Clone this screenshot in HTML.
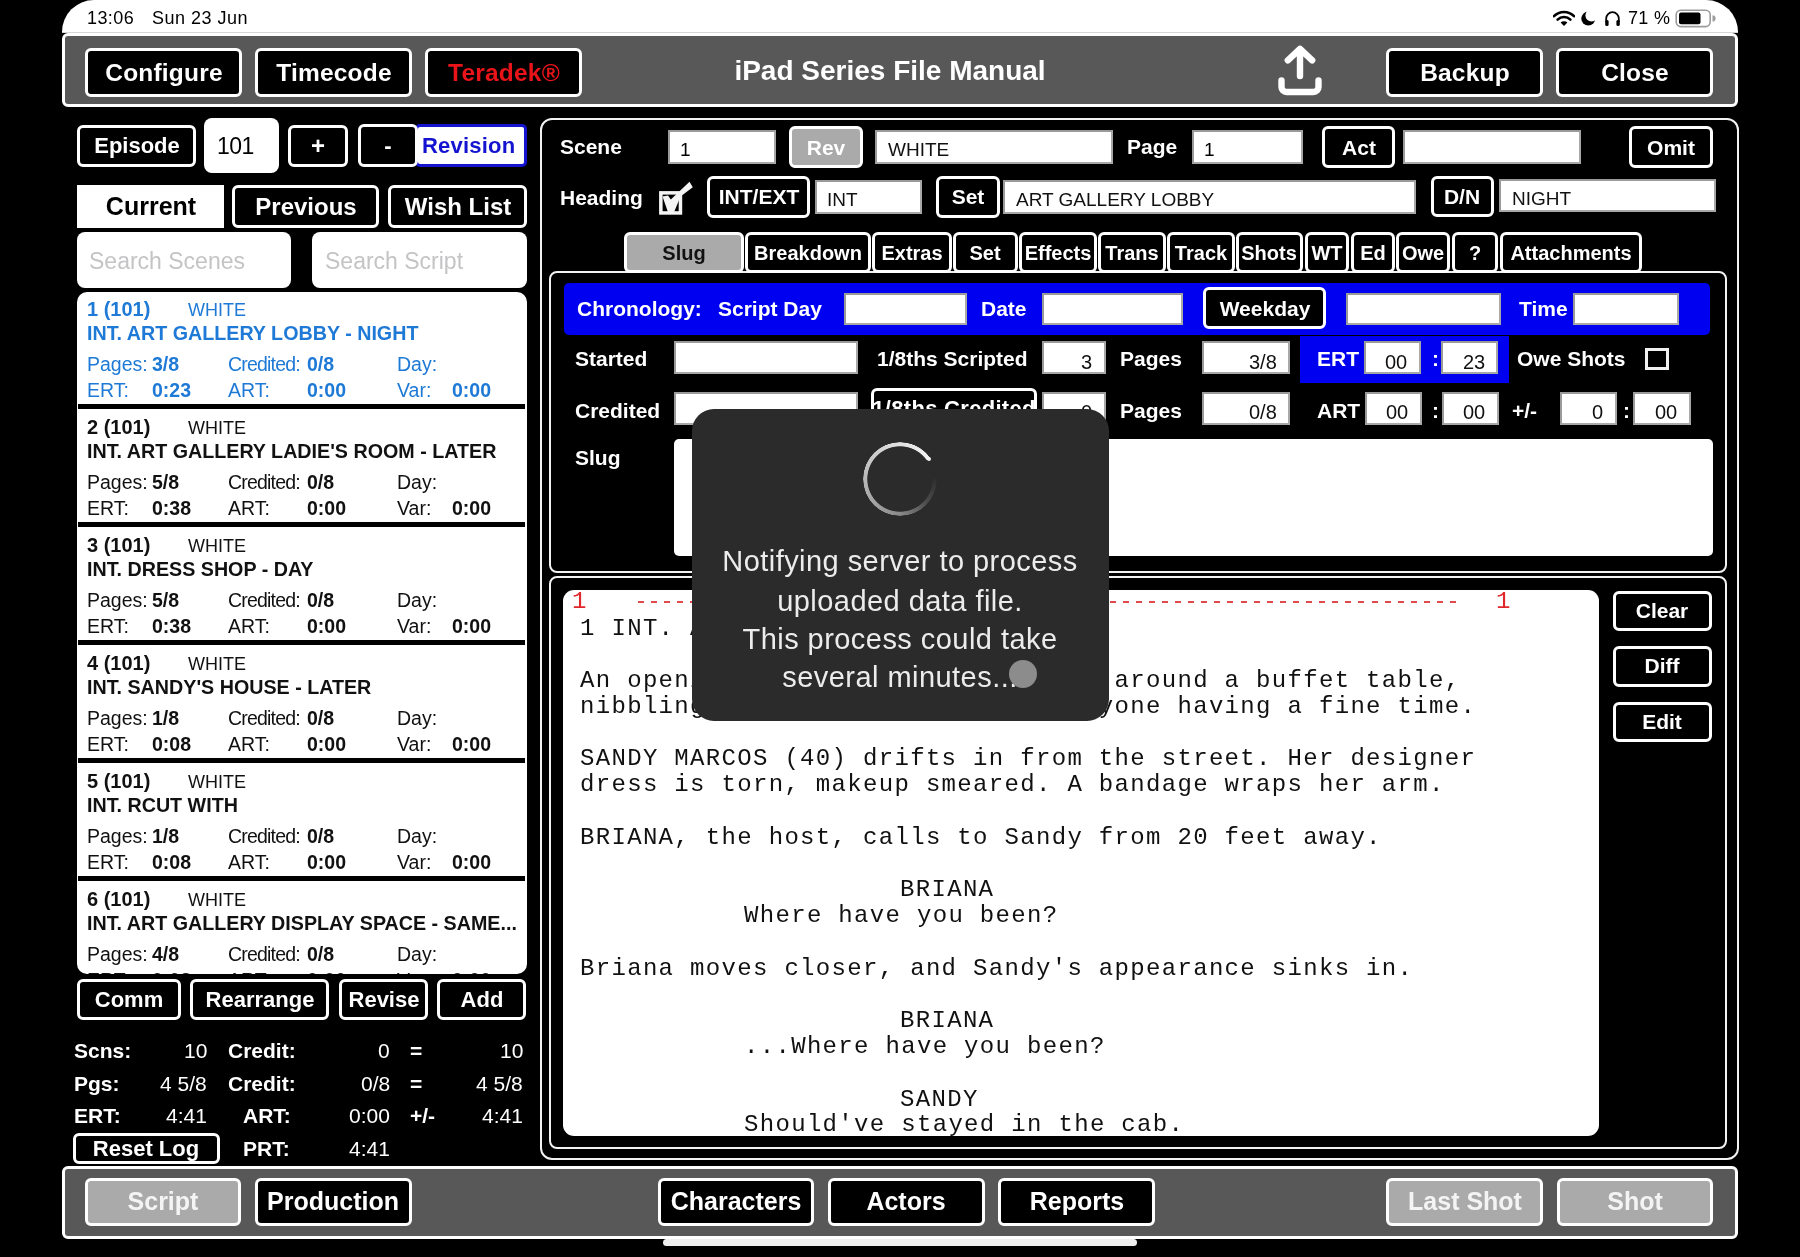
<!DOCTYPE html>
<html><head><meta charset="utf-8"><style>
html,body{margin:0;padding:0;}
body{width:1800px;height:1257px;background:#000;position:relative;overflow:hidden;font-family:'Liberation Sans', sans-serif;}
body div, body svg{position:absolute;}
.t{white-space:nowrap;will-change:transform;}
</style></head><body>
<div style="left:62px;top:0px;width:1676px;height:32px;background:#fff;border-radius:38px 38px 0 0;"></div>
<div style="left:62px;top:32px;width:1676px;height:1px;background:#d6d6d6;"></div>
<div class="t" style="left:87px;top:8.74px;font:normal 18px/18px 'Liberation Sans', sans-serif;color:#000;letter-spacing:0.4px;">13:06</div>
<div class="t" style="left:152px;top:8.74px;font:normal 18px/18px 'Liberation Sans', sans-serif;color:#000;letter-spacing:0.5px;">Sun 23 Jun</div>
<div class="t" style="left:1628px;top:8.74px;font:normal 18px/18px 'Liberation Sans', sans-serif;color:#000;letter-spacing:0.3px;">71 %</div>
<svg style="left:1553px;top:10px" width="22" height="17" viewBox="0 0 22 17">
<path d="M1 6.2 A14 14 0 0 1 21 6.2" fill="none" stroke="#000" stroke-width="2.6" stroke-linecap="round"/>
<path d="M4.6 9.6 A9 9 0 0 1 17.4 9.6" fill="none" stroke="#000" stroke-width="2.6" stroke-linecap="round"/>
<path d="M11 16 L7.6 12.6 A4.8 4.8 0 0 1 14.4 12.6 Z" fill="#000"/>
</svg>
<svg style="left:1580px;top:10px" width="17" height="17" viewBox="0 0 17 17">
<defs><mask id="mm"><rect width="17" height="17" fill="#fff"/><circle cx="11.6" cy="5.4" r="6.2" fill="#000"/></mask></defs>
<circle cx="8.3" cy="8.6" r="7" fill="#000" mask="url(#mm)"/>
</svg>
<svg style="left:1604px;top:10px" width="17" height="17" viewBox="0 0 17 17">
<path d="M2.2 12 V8.5 A6.3 6.3 0 0 1 14.8 8.5 V12" fill="none" stroke="#000" stroke-width="1.8"/>
<rect x="1.2" y="10" width="3.4" height="6" rx="1.5" fill="#000"/>
<rect x="12.4" y="10" width="3.4" height="6" rx="1.5" fill="#000"/>
</svg>
<svg style="left:1675px;top:9px" width="42" height="19" viewBox="0 0 42 19">
<rect x="1.2" y="1.2" width="34" height="16.4" rx="4.5" fill="none" stroke="#9c9c9c" stroke-width="1.6"/>
<rect x="4" y="3.6" width="21.5" height="11.6" rx="2" fill="#000"/>
<path d="M37.5 6.3 A3 3 0 0 1 37.5 12.5 Z" fill="#9c9c9c"/>
</svg>
<div style="left:62px;top:33px;width:1676px;height:74px;background:#585858;border:3px solid #fff;border-radius:6px;box-sizing:border-box;"></div>
<div style="left:85px;top:48px;width:157px;height:49px;background:#000;border:3px solid #fff;border-radius:6px;box-sizing:border-box;"></div>
<div class="t" style="left:-336.5px;width:1000px;text-align:center;top:60.54px;font:bold 24.5px/24.5px 'Liberation Sans', sans-serif;color:#fff;letter-spacing:0.2px;">Configure</div>
<div style="left:255px;top:48px;width:157px;height:49px;background:#000;border:3px solid #fff;border-radius:6px;box-sizing:border-box;"></div>
<div class="t" style="left:-166.5px;width:1000px;text-align:center;top:60.54px;font:bold 24.5px/24.5px 'Liberation Sans', sans-serif;color:#fff;letter-spacing:0.2px;">Timecode</div>
<div style="left:425px;top:48px;width:157px;height:49px;background:#000;border:3px solid #fff;border-radius:6px;box-sizing:border-box;"></div>
<div class="t" style="left:3.5px;width:1000px;text-align:center;top:60.54px;font:bold 24.5px/24.5px 'Liberation Sans', sans-serif;color:#e8141a;letter-spacing:0.2px;">Teradek®</div>
<div style="left:1386px;top:48px;width:157px;height:49px;background:#000;border:3px solid #fff;border-radius:6px;box-sizing:border-box;"></div>
<div class="t" style="left:964.5px;width:1000px;text-align:center;top:60.54px;font:bold 24.5px/24.5px 'Liberation Sans', sans-serif;color:#fff;letter-spacing:0.2px;">Backup</div>
<div style="left:1556px;top:48px;width:157px;height:49px;background:#000;border:3px solid #fff;border-radius:6px;box-sizing:border-box;"></div>
<div class="t" style="left:1134.5px;width:1000px;text-align:center;top:60.54px;font:bold 24.5px/24.5px 'Liberation Sans', sans-serif;color:#fff;letter-spacing:0.2px;">Close</div>
<div class="t" style="left:390px;width:1000px;text-align:center;top:57.27px;font:bold 28px/28px 'Liberation Sans', sans-serif;color:#fff;">iPad Series File Manual</div>
<svg style="left:1274px;top:42px" width="52" height="58" viewBox="0 0 52 58">
<path d="M26 34 V8 M13.8 18.3 L26 6.8 L38.2 18.3" fill="none" stroke="#fff" stroke-width="6.4" stroke-linecap="round" stroke-linejoin="round"/>
<path d="M7.5 38.5 V45 A5 5 0 0 0 12.5 50 H39.5 A5 5 0 0 0 44.5 45 V38.5" fill="none" stroke="#fff" stroke-width="6.4" stroke-linecap="round" stroke-linejoin="round"/>
</svg>
<div style="left:77px;top:125px;width:119px;height:42px;background:#000;border:3px solid #fff;border-radius:6px;box-sizing:border-box;"></div>
<div class="t" style="left:-363.5px;width:1000px;text-align:center;top:135.35px;font:bold 22px/22px 'Liberation Sans', sans-serif;color:#fff;">Episode</div>
<div style="left:204px;top:118px;width:75px;height:55px;background:#fff;border-radius:8px;"></div>
<div class="t" style="left:217px;top:134.51px;font:normal 23px/23px 'Liberation Sans', sans-serif;color:#000;letter-spacing:-0.5px;">101</div>
<div style="left:288px;top:125px;width:60px;height:42px;background:#000;border:3px solid #fff;border-radius:6px;box-sizing:border-box;"></div>
<div class="t" style="left:-182.0px;width:1000px;text-align:center;top:133.66px;font:bold 24px/24px 'Liberation Sans', sans-serif;color:#fff;">+</div>
<div style="left:415px;top:124px;width:112px;height:43px;background:#fff;border:3px solid #1414d0;border-radius:5px;box-sizing:border-box;"></div>
<div class="t" style="left:422px;top:135.35px;font:bold 22px/22px 'Liberation Sans', sans-serif;color:#1414d0;letter-spacing:0.2px;">Revision</div>
<div style="left:358px;top:124px;width:60px;height:43px;background:#000;border:3px solid #fff;border-radius:6px;box-sizing:border-box;"></div>
<div class="t" style="left:-112.0px;width:1000px;text-align:center;top:135.35px;font:bold 22px/22px 'Liberation Sans', sans-serif;color:#fff;">-</div>
<div style="left:77px;top:185px;width:147px;height:43px;background:#fff;"></div>
<div class="t" style="left:-349.5px;width:1000px;text-align:center;top:193.81px;font:bold 25px/25px 'Liberation Sans', sans-serif;color:#000;">Current</div>
<div style="left:232px;top:185px;width:147px;height:43px;background:#000;border:3px solid #fff;border-radius:6px;box-sizing:border-box;"></div>
<div class="t" style="left:-194.5px;width:1000px;text-align:center;top:194.66px;font:bold 24px/24px 'Liberation Sans', sans-serif;color:#fff;">Previous</div>
<div style="left:388px;top:185px;width:139px;height:43px;background:#000;border:3px solid #fff;border-radius:6px;box-sizing:border-box;"></div>
<div class="t" style="left:-42.5px;width:1000px;text-align:center;top:194.66px;font:bold 24px/24px 'Liberation Sans', sans-serif;color:#fff;">Wish List</div>
<div style="left:77px;top:232px;width:214px;height:56px;background:#fff;border-radius:8px;"></div>
<div class="t" style="left:89px;top:249.51px;font:normal 23px/23px 'Liberation Sans', sans-serif;color:#c4c4c6;">Search Scenes</div>
<div style="left:312px;top:232px;width:215px;height:56px;background:#fff;border-radius:8px;"></div>
<div class="t" style="left:325px;top:249.51px;font:normal 23px/23px 'Liberation Sans', sans-serif;color:#c4c4c6;">Search Script</div>
<div style="left:77px;top:292px;width:450px;height:682px;background:#fff;border-radius:10px;overflow:hidden;">
<div class="t" style="left:10px;top:7.05px;font:bold 20px/20px 'Liberation Sans', sans-serif;color:#1e7ad6;">1 (101)</div>
<div class="t" style="left:111px;top:8.74px;font:normal 18px/18px 'Liberation Sans', sans-serif;color:#1e7ad6;">WHITE</div>
<div class="t" style="left:10px;top:32.30px;font:bold 19.7px/19.7px 'Liberation Sans', sans-serif;color:#1e7ad6;">INT. ART GALLERY LOBBY - NIGHT</div>
<div class="t" style="left:10px;top:62.97px;font:normal 19.5px/19.5px 'Liberation Sans', sans-serif;color:#1e7ad6;">Pages:</div>
<div class="t" style="left:75px;top:62.97px;font:bold 19.5px/19.5px 'Liberation Sans', sans-serif;color:#1e7ad6;">3/8</div>
<div class="t" style="left:150.5px;top:62.97px;font:normal 19.5px/19.5px 'Liberation Sans', sans-serif;color:#1e7ad6;letter-spacing:-0.8px;">Credited:</div>
<div class="t" style="left:230px;top:62.97px;font:bold 19.5px/19.5px 'Liberation Sans', sans-serif;color:#1e7ad6;">0/8</div>
<div class="t" style="left:320px;top:62.97px;font:normal 19.5px/19.5px 'Liberation Sans', sans-serif;color:#1e7ad6;">Day:</div>
<div class="t" style="left:10px;top:88.97px;font:normal 19.5px/19.5px 'Liberation Sans', sans-serif;color:#1e7ad6;">ERT:</div>
<div class="t" style="left:75px;top:88.97px;font:bold 19.5px/19.5px 'Liberation Sans', sans-serif;color:#1e7ad6;">0:23</div>
<div class="t" style="left:150.5px;top:88.97px;font:normal 19.5px/19.5px 'Liberation Sans', sans-serif;color:#1e7ad6;">ART:</div>
<div class="t" style="left:230px;top:88.97px;font:bold 19.5px/19.5px 'Liberation Sans', sans-serif;color:#1e7ad6;">0:00</div>
<div class="t" style="left:320px;top:88.97px;font:normal 19.5px/19.5px 'Liberation Sans', sans-serif;color:#1e7ad6;">Var:</div>
<div class="t" style="left:375px;top:88.97px;font:bold 19.5px/19.5px 'Liberation Sans', sans-serif;color:#1e7ad6;">0:00</div>
<div style="left:1px;top:112px;width:447px;height:5px;background:#000;"></div>
<div class="t" style="left:10px;top:125.05px;font:bold 20px/20px 'Liberation Sans', sans-serif;color:#111;">2 (101)</div>
<div class="t" style="left:111px;top:126.75px;font:normal 18px/18px 'Liberation Sans', sans-serif;color:#111;">WHITE</div>
<div class="t" style="left:10px;top:150.30px;font:bold 19.7px/19.7px 'Liberation Sans', sans-serif;color:#111;">INT. ART GALLERY LADIE'S ROOM - LATER</div>
<div class="t" style="left:10px;top:180.97px;font:normal 19.5px/19.5px 'Liberation Sans', sans-serif;color:#111;">Pages:</div>
<div class="t" style="left:75px;top:180.97px;font:bold 19.5px/19.5px 'Liberation Sans', sans-serif;color:#111;">5/8</div>
<div class="t" style="left:150.5px;top:180.97px;font:normal 19.5px/19.5px 'Liberation Sans', sans-serif;color:#111;letter-spacing:-0.8px;">Credited:</div>
<div class="t" style="left:230px;top:180.97px;font:bold 19.5px/19.5px 'Liberation Sans', sans-serif;color:#111;">0/8</div>
<div class="t" style="left:320px;top:180.97px;font:normal 19.5px/19.5px 'Liberation Sans', sans-serif;color:#111;">Day:</div>
<div class="t" style="left:10px;top:206.97px;font:normal 19.5px/19.5px 'Liberation Sans', sans-serif;color:#111;">ERT:</div>
<div class="t" style="left:75px;top:206.97px;font:bold 19.5px/19.5px 'Liberation Sans', sans-serif;color:#111;">0:38</div>
<div class="t" style="left:150.5px;top:206.97px;font:normal 19.5px/19.5px 'Liberation Sans', sans-serif;color:#111;">ART:</div>
<div class="t" style="left:230px;top:206.97px;font:bold 19.5px/19.5px 'Liberation Sans', sans-serif;color:#111;">0:00</div>
<div class="t" style="left:320px;top:206.97px;font:normal 19.5px/19.5px 'Liberation Sans', sans-serif;color:#111;">Var:</div>
<div class="t" style="left:375px;top:206.97px;font:bold 19.5px/19.5px 'Liberation Sans', sans-serif;color:#111;">0:00</div>
<div style="left:1px;top:230px;width:447px;height:5px;background:#000;"></div>
<div class="t" style="left:10px;top:243.05px;font:bold 20px/20px 'Liberation Sans', sans-serif;color:#111;">3 (101)</div>
<div class="t" style="left:111px;top:244.75px;font:normal 18px/18px 'Liberation Sans', sans-serif;color:#111;">WHITE</div>
<div class="t" style="left:10px;top:268.30px;font:bold 19.7px/19.7px 'Liberation Sans', sans-serif;color:#111;">INT. DRESS SHOP - DAY</div>
<div class="t" style="left:10px;top:298.97px;font:normal 19.5px/19.5px 'Liberation Sans', sans-serif;color:#111;">Pages:</div>
<div class="t" style="left:75px;top:298.97px;font:bold 19.5px/19.5px 'Liberation Sans', sans-serif;color:#111;">5/8</div>
<div class="t" style="left:150.5px;top:298.97px;font:normal 19.5px/19.5px 'Liberation Sans', sans-serif;color:#111;letter-spacing:-0.8px;">Credited:</div>
<div class="t" style="left:230px;top:298.97px;font:bold 19.5px/19.5px 'Liberation Sans', sans-serif;color:#111;">0/8</div>
<div class="t" style="left:320px;top:298.97px;font:normal 19.5px/19.5px 'Liberation Sans', sans-serif;color:#111;">Day:</div>
<div class="t" style="left:10px;top:324.97px;font:normal 19.5px/19.5px 'Liberation Sans', sans-serif;color:#111;">ERT:</div>
<div class="t" style="left:75px;top:324.97px;font:bold 19.5px/19.5px 'Liberation Sans', sans-serif;color:#111;">0:38</div>
<div class="t" style="left:150.5px;top:324.97px;font:normal 19.5px/19.5px 'Liberation Sans', sans-serif;color:#111;">ART:</div>
<div class="t" style="left:230px;top:324.97px;font:bold 19.5px/19.5px 'Liberation Sans', sans-serif;color:#111;">0:00</div>
<div class="t" style="left:320px;top:324.97px;font:normal 19.5px/19.5px 'Liberation Sans', sans-serif;color:#111;">Var:</div>
<div class="t" style="left:375px;top:324.97px;font:bold 19.5px/19.5px 'Liberation Sans', sans-serif;color:#111;">0:00</div>
<div style="left:1px;top:348px;width:447px;height:5px;background:#000;"></div>
<div class="t" style="left:10px;top:361.05px;font:bold 20px/20px 'Liberation Sans', sans-serif;color:#111;">4 (101)</div>
<div class="t" style="left:111px;top:362.75px;font:normal 18px/18px 'Liberation Sans', sans-serif;color:#111;">WHITE</div>
<div class="t" style="left:10px;top:386.30px;font:bold 19.7px/19.7px 'Liberation Sans', sans-serif;color:#111;">INT. SANDY'S HOUSE - LATER</div>
<div class="t" style="left:10px;top:416.97px;font:normal 19.5px/19.5px 'Liberation Sans', sans-serif;color:#111;">Pages:</div>
<div class="t" style="left:75px;top:416.97px;font:bold 19.5px/19.5px 'Liberation Sans', sans-serif;color:#111;">1/8</div>
<div class="t" style="left:150.5px;top:416.97px;font:normal 19.5px/19.5px 'Liberation Sans', sans-serif;color:#111;letter-spacing:-0.8px;">Credited:</div>
<div class="t" style="left:230px;top:416.97px;font:bold 19.5px/19.5px 'Liberation Sans', sans-serif;color:#111;">0/8</div>
<div class="t" style="left:320px;top:416.97px;font:normal 19.5px/19.5px 'Liberation Sans', sans-serif;color:#111;">Day:</div>
<div class="t" style="left:10px;top:442.97px;font:normal 19.5px/19.5px 'Liberation Sans', sans-serif;color:#111;">ERT:</div>
<div class="t" style="left:75px;top:442.97px;font:bold 19.5px/19.5px 'Liberation Sans', sans-serif;color:#111;">0:08</div>
<div class="t" style="left:150.5px;top:442.97px;font:normal 19.5px/19.5px 'Liberation Sans', sans-serif;color:#111;">ART:</div>
<div class="t" style="left:230px;top:442.97px;font:bold 19.5px/19.5px 'Liberation Sans', sans-serif;color:#111;">0:00</div>
<div class="t" style="left:320px;top:442.97px;font:normal 19.5px/19.5px 'Liberation Sans', sans-serif;color:#111;">Var:</div>
<div class="t" style="left:375px;top:442.97px;font:bold 19.5px/19.5px 'Liberation Sans', sans-serif;color:#111;">0:00</div>
<div style="left:1px;top:466px;width:447px;height:5px;background:#000;"></div>
<div class="t" style="left:10px;top:479.05px;font:bold 20px/20px 'Liberation Sans', sans-serif;color:#111;">5 (101)</div>
<div class="t" style="left:111px;top:480.75px;font:normal 18px/18px 'Liberation Sans', sans-serif;color:#111;">WHITE</div>
<div class="t" style="left:10px;top:504.30px;font:bold 19.7px/19.7px 'Liberation Sans', sans-serif;color:#111;">INT. RCUT WITH</div>
<div class="t" style="left:10px;top:534.97px;font:normal 19.5px/19.5px 'Liberation Sans', sans-serif;color:#111;">Pages:</div>
<div class="t" style="left:75px;top:534.97px;font:bold 19.5px/19.5px 'Liberation Sans', sans-serif;color:#111;">1/8</div>
<div class="t" style="left:150.5px;top:534.97px;font:normal 19.5px/19.5px 'Liberation Sans', sans-serif;color:#111;letter-spacing:-0.8px;">Credited:</div>
<div class="t" style="left:230px;top:534.97px;font:bold 19.5px/19.5px 'Liberation Sans', sans-serif;color:#111;">0/8</div>
<div class="t" style="left:320px;top:534.97px;font:normal 19.5px/19.5px 'Liberation Sans', sans-serif;color:#111;">Day:</div>
<div class="t" style="left:10px;top:560.97px;font:normal 19.5px/19.5px 'Liberation Sans', sans-serif;color:#111;">ERT:</div>
<div class="t" style="left:75px;top:560.97px;font:bold 19.5px/19.5px 'Liberation Sans', sans-serif;color:#111;">0:08</div>
<div class="t" style="left:150.5px;top:560.97px;font:normal 19.5px/19.5px 'Liberation Sans', sans-serif;color:#111;">ART:</div>
<div class="t" style="left:230px;top:560.97px;font:bold 19.5px/19.5px 'Liberation Sans', sans-serif;color:#111;">0:00</div>
<div class="t" style="left:320px;top:560.97px;font:normal 19.5px/19.5px 'Liberation Sans', sans-serif;color:#111;">Var:</div>
<div class="t" style="left:375px;top:560.97px;font:bold 19.5px/19.5px 'Liberation Sans', sans-serif;color:#111;">0:00</div>
<div style="left:1px;top:584px;width:447px;height:5px;background:#000;"></div>
<div class="t" style="left:10px;top:597.05px;font:bold 20px/20px 'Liberation Sans', sans-serif;color:#111;">6 (101)</div>
<div class="t" style="left:111px;top:598.75px;font:normal 18px/18px 'Liberation Sans', sans-serif;color:#111;">WHITE</div>
<div class="t" style="left:10px;top:622.30px;font:bold 19.7px/19.7px 'Liberation Sans', sans-serif;color:#111;">INT. ART GALLERY DISPLAY SPACE - SAME...</div>
<div class="t" style="left:10px;top:652.97px;font:normal 19.5px/19.5px 'Liberation Sans', sans-serif;color:#111;">Pages:</div>
<div class="t" style="left:75px;top:652.97px;font:bold 19.5px/19.5px 'Liberation Sans', sans-serif;color:#111;">4/8</div>
<div class="t" style="left:150.5px;top:652.97px;font:normal 19.5px/19.5px 'Liberation Sans', sans-serif;color:#111;letter-spacing:-0.8px;">Credited:</div>
<div class="t" style="left:230px;top:652.97px;font:bold 19.5px/19.5px 'Liberation Sans', sans-serif;color:#111;">0/8</div>
<div class="t" style="left:320px;top:652.97px;font:normal 19.5px/19.5px 'Liberation Sans', sans-serif;color:#111;">Day:</div>
<div class="t" style="left:10px;top:678.97px;font:normal 19.5px/19.5px 'Liberation Sans', sans-serif;color:#111;">ERT:</div>
<div class="t" style="left:75px;top:678.97px;font:bold 19.5px/19.5px 'Liberation Sans', sans-serif;color:#111;">0:08</div>
<div class="t" style="left:150.5px;top:678.97px;font:normal 19.5px/19.5px 'Liberation Sans', sans-serif;color:#111;">ART:</div>
<div class="t" style="left:230px;top:678.97px;font:bold 19.5px/19.5px 'Liberation Sans', sans-serif;color:#111;">0:00</div>
<div class="t" style="left:320px;top:678.97px;font:normal 19.5px/19.5px 'Liberation Sans', sans-serif;color:#111;">Var:</div>
<div class="t" style="left:375px;top:678.97px;font:bold 19.5px/19.5px 'Liberation Sans', sans-serif;color:#111;">0:00</div>
<div style="left:1px;top:702px;width:447px;height:5px;background:#000;"></div>
<div class="t" style="left:10px;top:715.05px;font:bold 20px/20px 'Liberation Sans', sans-serif;color:#111;">7 (101)</div>
<div class="t" style="left:111px;top:716.75px;font:normal 18px/18px 'Liberation Sans', sans-serif;color:#111;">WHITE</div>
<div class="t" style="left:10px;top:740.30px;font:bold 19.7px/19.7px 'Liberation Sans', sans-serif;color:#111;">INT. ART GALLERY - LATER</div>
<div class="t" style="left:10px;top:770.97px;font:normal 19.5px/19.5px 'Liberation Sans', sans-serif;color:#111;">Pages:</div>
<div class="t" style="left:75px;top:770.97px;font:bold 19.5px/19.5px 'Liberation Sans', sans-serif;color:#111;">1/8</div>
<div class="t" style="left:150.5px;top:770.97px;font:normal 19.5px/19.5px 'Liberation Sans', sans-serif;color:#111;letter-spacing:-0.8px;">Credited:</div>
<div class="t" style="left:230px;top:770.97px;font:bold 19.5px/19.5px 'Liberation Sans', sans-serif;color:#111;">0/8</div>
<div class="t" style="left:320px;top:770.97px;font:normal 19.5px/19.5px 'Liberation Sans', sans-serif;color:#111;">Day:</div>
<div class="t" style="left:10px;top:796.97px;font:normal 19.5px/19.5px 'Liberation Sans', sans-serif;color:#111;">ERT:</div>
<div class="t" style="left:75px;top:796.97px;font:bold 19.5px/19.5px 'Liberation Sans', sans-serif;color:#111;">0:08</div>
<div class="t" style="left:150.5px;top:796.97px;font:normal 19.5px/19.5px 'Liberation Sans', sans-serif;color:#111;">ART:</div>
<div class="t" style="left:230px;top:796.97px;font:bold 19.5px/19.5px 'Liberation Sans', sans-serif;color:#111;">0:00</div>
<div class="t" style="left:320px;top:796.97px;font:normal 19.5px/19.5px 'Liberation Sans', sans-serif;color:#111;">Var:</div>
<div class="t" style="left:375px;top:796.97px;font:bold 19.5px/19.5px 'Liberation Sans', sans-serif;color:#111;">0:00</div>
<div style="left:1px;top:820px;width:447px;height:5px;background:#000;"></div>
</div>
<div style="left:77px;top:979px;width:104px;height:40.5px;background:#000;border:3px solid #fff;border-radius:6px;box-sizing:border-box;"></div>
<div class="t" style="left:-371.0px;width:1000px;text-align:center;top:989.36px;font:bold 22px/22px 'Liberation Sans', sans-serif;color:#fff;">Comm</div>
<div style="left:190px;top:979px;width:139px;height:40.5px;background:#000;border:3px solid #fff;border-radius:6px;box-sizing:border-box;"></div>
<div class="t" style="left:-240.5px;width:1000px;text-align:center;top:989.36px;font:bold 22px/22px 'Liberation Sans', sans-serif;color:#fff;">Rearrange</div>
<div style="left:339px;top:979px;width:89px;height:40.5px;background:#000;border:3px solid #fff;border-radius:6px;box-sizing:border-box;"></div>
<div class="t" style="left:-116.5px;width:1000px;text-align:center;top:989.36px;font:bold 22px/22px 'Liberation Sans', sans-serif;color:#fff;">Revise</div>
<div style="left:437px;top:979px;width:89px;height:40.5px;background:#000;border:3px solid #fff;border-radius:6px;box-sizing:border-box;"></div>
<div class="t" style="left:-18.5px;width:1000px;text-align:center;top:989.36px;font:bold 22px/22px 'Liberation Sans', sans-serif;color:#fff;">Add</div>
<div class="t" style="left:74px;top:1040.20px;font:bold 21px/21px 'Liberation Sans', sans-serif;color:#fff;">Scns:</div>
<div class="t" style="right:1593px;text-align:right;top:1040.20px;font:normal 21px/21px 'Liberation Sans', sans-serif;color:#fff;">10</div>
<div class="t" style="left:228px;top:1040.20px;font:bold 21px/21px 'Liberation Sans', sans-serif;color:#fff;">Credit:</div>
<div class="t" style="right:1410px;text-align:right;top:1040.20px;font:normal 21px/21px 'Liberation Sans', sans-serif;color:#fff;">0</div>
<div class="t" style="left:410px;top:1040.20px;font:bold 21px/21px 'Liberation Sans', sans-serif;color:#fff;">=</div>
<div class="t" style="right:1277px;text-align:right;top:1040.20px;font:normal 21px/21px 'Liberation Sans', sans-serif;color:#fff;">10</div>
<div class="t" style="left:74px;top:1073.20px;font:bold 21px/21px 'Liberation Sans', sans-serif;color:#fff;">Pgs:</div>
<div class="t" style="right:1593px;text-align:right;top:1073.20px;font:normal 21px/21px 'Liberation Sans', sans-serif;color:#fff;">4 5/8</div>
<div class="t" style="left:228px;top:1073.20px;font:bold 21px/21px 'Liberation Sans', sans-serif;color:#fff;">Credit:</div>
<div class="t" style="right:1410px;text-align:right;top:1073.20px;font:normal 21px/21px 'Liberation Sans', sans-serif;color:#fff;">0/8</div>
<div class="t" style="left:410px;top:1073.20px;font:bold 21px/21px 'Liberation Sans', sans-serif;color:#fff;">=</div>
<div class="t" style="right:1277px;text-align:right;top:1073.20px;font:normal 21px/21px 'Liberation Sans', sans-serif;color:#fff;">4 5/8</div>
<div class="t" style="left:74px;top:1105.20px;font:bold 21px/21px 'Liberation Sans', sans-serif;color:#fff;">ERT:</div>
<div class="t" style="right:1593px;text-align:right;top:1105.20px;font:normal 21px/21px 'Liberation Sans', sans-serif;color:#fff;">4:41</div>
<div class="t" style="left:243px;top:1105.20px;font:bold 21px/21px 'Liberation Sans', sans-serif;color:#fff;">ART:</div>
<div class="t" style="right:1410px;text-align:right;top:1105.20px;font:normal 21px/21px 'Liberation Sans', sans-serif;color:#fff;">0:00</div>
<div class="t" style="left:410px;top:1105.20px;font:bold 21px/21px 'Liberation Sans', sans-serif;color:#fff;">+/-</div>
<div class="t" style="right:1277px;text-align:right;top:1105.20px;font:normal 21px/21px 'Liberation Sans', sans-serif;color:#fff;">4:41</div>
<div style="left:72.5px;top:1132.5px;width:147.5px;height:31.0px;background:#000;border:3px solid #fff;border-radius:6px;box-sizing:border-box;"></div>
<div class="t" style="left:-353.75px;width:1000px;text-align:center;top:1138.36px;font:bold 22px/22px 'Liberation Sans', sans-serif;color:#fff;">Reset Log</div>
<div class="t" style="left:243px;top:1137.70px;font:bold 21px/21px 'Liberation Sans', sans-serif;color:#fff;">PRT:</div>
<div class="t" style="right:1410px;text-align:right;top:1137.70px;font:normal 21px/21px 'Liberation Sans', sans-serif;color:#fff;">4:41</div>
<div style="left:539.5px;top:118px;width:1199.0px;height:1041.5px;border:2px solid #f2f2f2;border-radius:12px;box-sizing:border-box;"></div>
<div class="t" style="left:560px;top:136.20px;font:bold 21px/21px 'Liberation Sans', sans-serif;color:#fff;">Scene</div>
<div style="left:668px;top:130px;width:108px;height:34px;background:#fff;border-style:solid;border-color:#9a9a9a #a8a8a8 #a8a8a8 #9a9a9a;border-width:2.5px 2px 2px 2.5px;box-sizing:border-box;"></div>
<div class="t" style="left:680px;top:139.90px;font:normal 19px/19px 'Liberation Sans', sans-serif;color:#000;">1</div>
<div style="left:789px;top:126px;width:73.5px;height:42px;background:#aaaaaa;border:3px solid #fff;border-radius:6px;box-sizing:border-box;"></div>
<div class="t" style="left:325.75px;width:1000px;text-align:center;top:136.50px;font:bold 21px/21px 'Liberation Sans', sans-serif;color:#fff;">Rev</div>
<div style="left:875px;top:130px;width:237.5px;height:34px;background:#fff;border-style:solid;border-color:#9a9a9a #a8a8a8 #a8a8a8 #9a9a9a;border-width:2.5px 2px 2px 2.5px;box-sizing:border-box;"></div>
<div class="t" style="left:888px;top:139.90px;font:normal 19px/19px 'Liberation Sans', sans-serif;color:#111;">WHITE</div>
<div class="t" style="left:1127px;top:136.20px;font:bold 21px/21px 'Liberation Sans', sans-serif;color:#fff;">Page</div>
<div style="left:1192px;top:130px;width:111px;height:34px;background:#fff;border-style:solid;border-color:#9a9a9a #a8a8a8 #a8a8a8 #9a9a9a;border-width:2.5px 2px 2px 2.5px;box-sizing:border-box;"></div>
<div class="t" style="left:1204px;top:139.90px;font:normal 19px/19px 'Liberation Sans', sans-serif;color:#000;">1</div>
<div style="left:1322px;top:126px;width:73px;height:42px;background:#000;border:3px solid #fff;border-radius:6px;box-sizing:border-box;"></div>
<div class="t" style="left:858.5px;width:1000px;text-align:center;top:136.50px;font:bold 21px/21px 'Liberation Sans', sans-serif;color:#fff;">Act</div>
<div style="left:1403px;top:130px;width:178px;height:34px;background:#fff;border-style:solid;border-color:#9a9a9a #a8a8a8 #a8a8a8 #9a9a9a;border-width:2.5px 2px 2px 2.5px;box-sizing:border-box;"></div>
<div style="left:1628.7px;top:126px;width:84.29999999999995px;height:42px;background:#000;border:3px solid #fff;border-radius:6px;box-sizing:border-box;"></div>
<div class="t" style="left:1170.85px;width:1000px;text-align:center;top:136.50px;font:bold 21px/21px 'Liberation Sans', sans-serif;color:#fff;">Omit</div>
<div class="t" style="left:560px;top:186.70px;font:bold 21px/21px 'Liberation Sans', sans-serif;color:#fff;">Heading</div>
<svg style="left:650px;top:175px" width="50" height="45" viewBox="0 0 50 45">
<rect x="10.85" y="17.85" width="19.6" height="20.1" fill="none" stroke="#f4f4f4" stroke-width="3.5"/>
<polygon points="12.5,21.5 18,20.5 20.8,24.5 39.5,6.8 42.8,12.2 30.5,21.5 23.8,37.8 18.2,37.8" fill="#f4f4f4"/>
</svg>
<div style="left:707px;top:175.5px;width:103px;height:42.5px;background:#000;border:3px solid #fff;border-radius:6px;box-sizing:border-box;"></div>
<div class="t" style="left:258.5px;width:1000px;text-align:center;top:186.20px;font:bold 21px/21px 'Liberation Sans', sans-serif;color:#fff;">INT/EXT</div>
<div style="left:815px;top:180px;width:107px;height:34px;background:#fff;border-style:solid;border-color:#9a9a9a #a8a8a8 #a8a8a8 #9a9a9a;border-width:2.5px 2px 2px 2.5px;box-sizing:border-box;"></div>
<div class="t" style="left:827px;top:190.40px;font:normal 19px/19px 'Liberation Sans', sans-serif;color:#111;">INT</div>
<div style="left:936px;top:175.5px;width:63.5px;height:42.5px;background:#000;border:3px solid #fff;border-radius:6px;box-sizing:border-box;"></div>
<div class="t" style="left:467.75px;width:1000px;text-align:center;top:186.20px;font:bold 21px/21px 'Liberation Sans', sans-serif;color:#fff;">Set</div>
<div style="left:1003px;top:180px;width:413px;height:34px;background:#fff;border-style:solid;border-color:#9a9a9a #a8a8a8 #a8a8a8 #9a9a9a;border-width:2.5px 2px 2px 2.5px;box-sizing:border-box;"></div>
<div class="t" style="left:1016px;top:190.40px;font:normal 19px/19px 'Liberation Sans', sans-serif;color:#111;">ART GALLERY LOBBY</div>
<div style="left:1430.7px;top:176px;width:62.899999999999864px;height:41px;background:#000;border:3px solid #fff;border-radius:6px;box-sizing:border-box;"></div>
<div class="t" style="left:962.1500000000001px;width:1000px;text-align:center;top:186.20px;font:bold 21px/21px 'Liberation Sans', sans-serif;color:#fff;">D/N</div>
<div style="left:1499px;top:179px;width:217px;height:33px;background:#fff;border-style:solid;border-color:#9a9a9a #a8a8a8 #a8a8a8 #9a9a9a;border-width:2.5px 2px 2px 2.5px;box-sizing:border-box;"></div>
<div class="t" style="left:1511.5px;top:189.40px;font:normal 19px/19px 'Liberation Sans', sans-serif;color:#111;">NIGHT</div>
<div style="left:549.4px;top:271px;width:1177.3000000000002px;height:301.70000000000005px;border:2px solid #f2f2f2;border-radius:8px;box-sizing:border-box;"></div>
<div style="left:623.6px;top:231.7px;width:120.79999999999995px;height:41.10000000000002px;background:#aaaaaa;border:3px solid #fff;border-radius:6px;box-sizing:border-box;"></div>
<div class="t" style="left:184.0px;width:1000px;text-align:center;top:242.55px;font:bold 20px/20px 'Liberation Sans', sans-serif;color:#111;">Slug</div>
<div style="left:745px;top:231.7px;width:126px;height:41.10000000000002px;background:#000;border:3px solid #fff;border-radius:6px;box-sizing:border-box;"></div>
<div class="t" style="left:308.0px;width:1000px;text-align:center;top:242.55px;font:bold 20px/20px 'Liberation Sans', sans-serif;color:#fff;">Breakdown</div>
<div style="left:872px;top:231.7px;width:80px;height:41.10000000000002px;background:#000;border:3px solid #fff;border-radius:6px;box-sizing:border-box;"></div>
<div class="t" style="left:412.0px;width:1000px;text-align:center;top:242.55px;font:bold 20px/20px 'Liberation Sans', sans-serif;color:#fff;">Extras</div>
<div style="left:952.8px;top:231.7px;width:65.20000000000005px;height:41.10000000000002px;background:#000;border:3px solid #fff;border-radius:6px;box-sizing:border-box;"></div>
<div class="t" style="left:485.4px;width:1000px;text-align:center;top:242.55px;font:bold 20px/20px 'Liberation Sans', sans-serif;color:#fff;">Set</div>
<div style="left:1019px;top:231.7px;width:78px;height:41.10000000000002px;background:#000;border:3px solid #fff;border-radius:6px;box-sizing:border-box;"></div>
<div class="t" style="left:558.0px;width:1000px;text-align:center;top:242.55px;font:bold 20px/20px 'Liberation Sans', sans-serif;color:#fff;">Effects</div>
<div style="left:1098px;top:231.7px;width:68px;height:41.10000000000002px;background:#000;border:3px solid #fff;border-radius:6px;box-sizing:border-box;"></div>
<div class="t" style="left:632.0px;width:1000px;text-align:center;top:242.55px;font:bold 20px/20px 'Liberation Sans', sans-serif;color:#fff;">Trans</div>
<div style="left:1167px;top:231.7px;width:67.5px;height:41.10000000000002px;background:#000;border:3px solid #fff;border-radius:6px;box-sizing:border-box;"></div>
<div class="t" style="left:700.75px;width:1000px;text-align:center;top:242.55px;font:bold 20px/20px 'Liberation Sans', sans-serif;color:#fff;">Track</div>
<div style="left:1235.5px;top:231.7px;width:67.5px;height:41.10000000000002px;background:#000;border:3px solid #fff;border-radius:6px;box-sizing:border-box;"></div>
<div class="t" style="left:769.25px;width:1000px;text-align:center;top:242.55px;font:bold 20px/20px 'Liberation Sans', sans-serif;color:#fff;">Shots</div>
<div style="left:1305px;top:231.7px;width:44px;height:41.10000000000002px;background:#000;border:3px solid #fff;border-radius:6px;box-sizing:border-box;"></div>
<div class="t" style="left:827.0px;width:1000px;text-align:center;top:242.55px;font:bold 20px/20px 'Liberation Sans', sans-serif;color:#fff;">WT</div>
<div style="left:1350.7px;top:231.7px;width:44.299999999999955px;height:41.10000000000002px;background:#000;border:3px solid #fff;border-radius:6px;box-sizing:border-box;"></div>
<div class="t" style="left:872.8499999999999px;width:1000px;text-align:center;top:242.55px;font:bold 20px/20px 'Liberation Sans', sans-serif;color:#fff;">Ed</div>
<div style="left:1396px;top:231.7px;width:54px;height:41.10000000000002px;background:#000;border:3px solid #fff;border-radius:6px;box-sizing:border-box;"></div>
<div class="t" style="left:923.0px;width:1000px;text-align:center;top:242.55px;font:bold 20px/20px 'Liberation Sans', sans-serif;color:#fff;">Owe</div>
<div style="left:1452px;top:231.7px;width:46px;height:41.10000000000002px;background:#000;border:3px solid #fff;border-radius:6px;box-sizing:border-box;"></div>
<div class="t" style="left:975.0px;width:1000px;text-align:center;top:242.55px;font:bold 20px/20px 'Liberation Sans', sans-serif;color:#fff;">?</div>
<div style="left:1500px;top:231.7px;width:141.5px;height:41.10000000000002px;background:#000;border:3px solid #fff;border-radius:6px;box-sizing:border-box;"></div>
<div class="t" style="left:1070.75px;width:1000px;text-align:center;top:242.55px;font:bold 20px/20px 'Liberation Sans', sans-serif;color:#fff;">Attachments</div>
<div style="left:564px;top:282.7px;width:1146px;height:52.30000000000001px;background:#0000f0;border-radius:5px;"></div>
<div class="t" style="left:576.7px;top:297.70px;font:bold 21px/21px 'Liberation Sans', sans-serif;color:#fff;">Chronology:</div>
<div class="t" style="left:718.3px;top:297.70px;font:bold 21px/21px 'Liberation Sans', sans-serif;color:#fff;">Script Day</div>
<div style="left:844.3px;top:292.7px;width:122.40000000000009px;height:32.30000000000001px;background:#fff;border-style:solid;border-color:#9a9a9a #a8a8a8 #a8a8a8 #9a9a9a;border-width:2.5px 2px 2px 2.5px;box-sizing:border-box;"></div>
<div class="t" style="left:981px;top:297.70px;font:bold 21px/21px 'Liberation Sans', sans-serif;color:#fff;">Date</div>
<div style="left:1042.3px;top:292.7px;width:141.0px;height:32.30000000000001px;background:#fff;border-style:solid;border-color:#9a9a9a #a8a8a8 #a8a8a8 #9a9a9a;border-width:2.5px 2px 2px 2.5px;box-sizing:border-box;"></div>
<div style="left:1203.3px;top:286.7px;width:122.40000000000009px;height:42.60000000000002px;background:#000;border:3px solid #fff;border-radius:6px;box-sizing:border-box;"></div>
<div class="t" style="left:764.5px;width:1000px;text-align:center;top:297.50px;font:bold 21px/21px 'Liberation Sans', sans-serif;color:#fff;">Weekday</div>
<div style="left:1346px;top:292.7px;width:154.70000000000005px;height:32.30000000000001px;background:#fff;border-style:solid;border-color:#9a9a9a #a8a8a8 #a8a8a8 #9a9a9a;border-width:2.5px 2px 2px 2.5px;box-sizing:border-box;"></div>
<div class="t" style="left:1519px;top:297.70px;font:bold 21px/21px 'Liberation Sans', sans-serif;color:#fff;">Time</div>
<div style="left:1573.3px;top:292.7px;width:106.0px;height:32.30000000000001px;background:#fff;border-style:solid;border-color:#9a9a9a #a8a8a8 #a8a8a8 #9a9a9a;border-width:2.5px 2px 2px 2.5px;box-sizing:border-box;"></div>
<div class="t" style="left:575px;top:348.20px;font:bold 21px/21px 'Liberation Sans', sans-serif;color:#fff;">Started</div>
<div style="left:674.3px;top:341px;width:183.4000000000001px;height:33.30000000000001px;background:#fff;border-style:solid;border-color:#9a9a9a #a8a8a8 #a8a8a8 #9a9a9a;border-width:2.5px 2px 2px 2.5px;box-sizing:border-box;"></div>
<div class="t" style="left:876.7px;top:348.20px;font:bold 21px/21px 'Liberation Sans', sans-serif;color:#fff;">1/8ths Scripted</div>
<div style="left:1041.7px;top:341px;width:64.29999999999995px;height:33.30000000000001px;background:#fff;border-style:solid;border-color:#9a9a9a #a8a8a8 #a8a8a8 #9a9a9a;border-width:2.5px 2px 2px 2.5px;box-sizing:border-box;"></div>
<div class="t" style="right:707.5px;text-align:right;top:351.55px;font:normal 20px/20px 'Liberation Sans', sans-serif;color:#111;">3</div>
<div class="t" style="left:1120px;top:348.20px;font:bold 21px/21px 'Liberation Sans', sans-serif;color:#fff;">Pages</div>
<div style="left:1201.7px;top:341px;width:88.29999999999995px;height:33.30000000000001px;background:#fff;border-style:solid;border-color:#9a9a9a #a8a8a8 #a8a8a8 #9a9a9a;border-width:2.5px 2px 2px 2.5px;box-sizing:border-box;"></div>
<div class="t" style="right:523.5px;text-align:right;top:351.55px;font:normal 20px/20px 'Liberation Sans', sans-serif;color:#111;">3/8</div>
<div style="left:1300px;top:336px;width:209.29999999999995px;height:47.30000000000001px;background:#0000f0;"></div>
<div class="t" style="left:1316.7px;top:348.20px;font:bold 21px/21px 'Liberation Sans', sans-serif;color:#fff;">ERT</div>
<div style="left:1364px;top:341px;width:56.700000000000045px;height:33.30000000000001px;background:#fff;border-style:solid;border-color:#9a9a9a #a8a8a8 #a8a8a8 #9a9a9a;border-width:2.5px 2px 2px 2.5px;box-sizing:border-box;"></div>
<div class="t" style="right:392.79999999999995px;text-align:right;top:351.55px;font:normal 20px/20px 'Liberation Sans', sans-serif;color:#111;">00</div>
<div class="t" style="left:1431.7px;top:348.20px;font:bold 21px/21px 'Liberation Sans', sans-serif;color:#fff;">:</div>
<div style="left:1440.7px;top:341px;width:57.59999999999991px;height:33.30000000000001px;background:#fff;border-style:solid;border-color:#9a9a9a #a8a8a8 #a8a8a8 #9a9a9a;border-width:2.5px 2px 2px 2.5px;box-sizing:border-box;"></div>
<div class="t" style="right:315.20000000000005px;text-align:right;top:351.55px;font:normal 20px/20px 'Liberation Sans', sans-serif;color:#111;">23</div>
<div class="t" style="left:1516.7px;top:348.20px;font:bold 21px/21px 'Liberation Sans', sans-serif;color:#fff;">Owe Shots</div>
<div style="left:1645px;top:347.7px;width:24px;height:22.30000000000001px;border:3px solid #f0f0f0;box-sizing:border-box;"></div>
<div class="t" style="left:575px;top:399.70px;font:bold 21px/21px 'Liberation Sans', sans-serif;color:#fff;">Credited</div>
<div style="left:674.3px;top:391.7px;width:183.4000000000001px;height:33.30000000000001px;background:#fff;border-style:solid;border-color:#9a9a9a #a8a8a8 #a8a8a8 #9a9a9a;border-width:2.5px 2px 2px 2.5px;box-sizing:border-box;"></div>
<div style="left:871px;top:388.3px;width:165.70000000000005px;height:43.69999999999999px;background:#000;border:3px solid #fff;border-radius:6px;box-sizing:border-box;"></div>
<div class="t" style="left:453.85px;width:1000px;text-align:center;top:397.86px;font:bold 22px/22px 'Liberation Sans', sans-serif;color:#fff;letter-spacing:0.3px;">1/8ths Credited</div>
<div style="left:1041.7px;top:391.7px;width:64.29999999999995px;height:33.30000000000001px;background:#fff;border-style:solid;border-color:#9a9a9a #a8a8a8 #a8a8a8 #9a9a9a;border-width:2.5px 2px 2px 2.5px;box-sizing:border-box;"></div>
<div class="t" style="right:707.5px;text-align:right;top:402.05px;font:normal 20px/20px 'Liberation Sans', sans-serif;color:#111;">0</div>
<div class="t" style="left:1120px;top:399.70px;font:bold 21px/21px 'Liberation Sans', sans-serif;color:#fff;">Pages</div>
<div style="left:1201.7px;top:391.7px;width:88.29999999999995px;height:33.30000000000001px;background:#fff;border-style:solid;border-color:#9a9a9a #a8a8a8 #a8a8a8 #9a9a9a;border-width:2.5px 2px 2px 2.5px;box-sizing:border-box;"></div>
<div class="t" style="right:523.5px;text-align:right;top:402.05px;font:normal 20px/20px 'Liberation Sans', sans-serif;color:#111;">0/8</div>
<div class="t" style="left:1317.3px;top:399.70px;font:bold 21px/21px 'Liberation Sans', sans-serif;color:#fff;">ART</div>
<div style="left:1365.3px;top:391.7px;width:56.40000000000009px;height:33.30000000000001px;background:#fff;border-style:solid;border-color:#9a9a9a #a8a8a8 #a8a8a8 #9a9a9a;border-width:2.5px 2px 2px 2.5px;box-sizing:border-box;"></div>
<div class="t" style="right:391.79999999999995px;text-align:right;top:402.05px;font:normal 20px/20px 'Liberation Sans', sans-serif;color:#111;">00</div>
<div class="t" style="left:1432px;top:399.70px;font:bold 21px/21px 'Liberation Sans', sans-serif;color:#fff;">:</div>
<div style="left:1441.7px;top:391.7px;width:57.299999999999955px;height:33.30000000000001px;background:#fff;border-style:solid;border-color:#9a9a9a #a8a8a8 #a8a8a8 #9a9a9a;border-width:2.5px 2px 2px 2.5px;box-sizing:border-box;"></div>
<div class="t" style="right:314.5px;text-align:right;top:402.05px;font:normal 20px/20px 'Liberation Sans', sans-serif;color:#111;">00</div>
<div class="t" style="left:1512.3px;top:399.70px;font:bold 21px/21px 'Liberation Sans', sans-serif;color:#fff;">+/-</div>
<div style="left:1560px;top:391.7px;width:56.700000000000045px;height:33.30000000000001px;background:#fff;border-style:solid;border-color:#9a9a9a #a8a8a8 #a8a8a8 #9a9a9a;border-width:2.5px 2px 2px 2.5px;box-sizing:border-box;"></div>
<div class="t" style="right:196.79999999999995px;text-align:right;top:402.05px;font:normal 20px/20px 'Liberation Sans', sans-serif;color:#111;">0</div>
<div class="t" style="left:1623px;top:399.70px;font:bold 21px/21px 'Liberation Sans', sans-serif;color:#fff;">:</div>
<div style="left:1633.3px;top:391.7px;width:57.40000000000009px;height:33.30000000000001px;background:#fff;border-style:solid;border-color:#9a9a9a #a8a8a8 #a8a8a8 #9a9a9a;border-width:2.5px 2px 2px 2.5px;box-sizing:border-box;"></div>
<div class="t" style="right:122.79999999999995px;text-align:right;top:402.05px;font:normal 20px/20px 'Liberation Sans', sans-serif;color:#111;">00</div>
<div class="t" style="left:575px;top:446.70px;font:bold 21px/21px 'Liberation Sans', sans-serif;color:#fff;">Slug</div>
<div style="left:674.3px;top:439.3px;width:1038.7px;height:116.69999999999999px;background:#fff;border-radius:5px;"></div>
<div style="left:549.4px;top:576.3px;width:1177.4px;height:573.2px;border:2px solid #f2f2f2;border-radius:8px;box-sizing:border-box;"></div>
<div style="left:563px;top:590px;width:1035.5px;height:546px;background:#fff;border-radius:11px;overflow:hidden;">
<div class="t" style="left:9px;top:-0.18px;font:normal 24px/24px 'Liberation Mono', monospace;color:#e0282c;">1</div>
<div class="t" style="left:933px;top:-0.18px;font:normal 24px/24px 'Liberation Mono', monospace;color:#e0282c;">1</div>
<div style="left:75px;top:11px;width:823px;height:2px;background:repeating-linear-gradient(90deg,#e04a4c 0 6px,transparent 6px 13.1px);"></div>
<div class="t" style="left:16.50px;top:26.62px;font:normal 24px/24px 'Liberation Mono', monospace;letter-spacing:1.32px;color:#111;">1 INT. ART GALLERY LOBBY - NIGHT</div>
<div class="t" style="left:16.50px;top:78.92px;font:normal 24px/24px 'Liberation Mono', monospace;letter-spacing:1.32px;color:#111;">An opening reception. GUESTS mill around a buffet table,</div>
<div class="t" style="left:16.50px;top:104.92px;font:normal 24px/24px 'Liberation Mono', monospace;letter-spacing:1.32px;color:#111;">nibbling hors d&#39;oeuvres, and everyone having a fine time.</div>
<div class="t" style="left:16.50px;top:156.62px;font:normal 24px/24px 'Liberation Mono', monospace;letter-spacing:1.32px;color:#111;">SANDY MARCOS (40) drifts in from the street. Her designer</div>
<div class="t" style="left:16.50px;top:183.32px;font:normal 24px/24px 'Liberation Mono', monospace;letter-spacing:1.32px;color:#111;">dress is torn, makeup smeared. A bandage wraps her arm.</div>
<div class="t" style="left:16.50px;top:235.62px;font:normal 24px/24px 'Liberation Mono', monospace;letter-spacing:1.32px;color:#111;">BRIANA, the host, calls to Sandy from 20 feet away.</div>
<div class="t" style="left:337.19px;top:288.22px;font:normal 24px/24px 'Liberation Mono', monospace;letter-spacing:1.32px;color:#111;">BRIANA</div>
<div class="t" style="left:180.77px;top:314.22px;font:normal 24px/24px 'Liberation Mono', monospace;letter-spacing:1.32px;color:#111;">Where have you been?</div>
<div class="t" style="left:16.50px;top:367.02px;font:normal 24px/24px 'Liberation Mono', monospace;letter-spacing:1.32px;color:#111;">Briana moves closer, and Sandy&#39;s appearance sinks in.</div>
<div class="t" style="left:337.19px;top:419.42px;font:normal 24px/24px 'Liberation Mono', monospace;letter-spacing:1.32px;color:#111;">BRIANA</div>
<div class="t" style="left:180.77px;top:445.12px;font:normal 24px/24px 'Liberation Mono', monospace;letter-spacing:1.32px;color:#111;">...Where have you been?</div>
<div class="t" style="left:337.19px;top:497.62px;font:normal 24px/24px 'Liberation Mono', monospace;letter-spacing:1.32px;color:#111;">SANDY</div>
<div class="t" style="left:180.77px;top:523.22px;font:normal 24px/24px 'Liberation Mono', monospace;letter-spacing:1.32px;color:#111;">Should&#39;ve stayed in the cab.</div>
</div>
<div style="left:1612.7px;top:590.6px;width:98.89999999999986px;height:40.60000000000002px;background:#000;border:3px solid #fff;border-radius:6px;box-sizing:border-box;"></div>
<div class="t" style="left:1162.15px;width:1000px;text-align:center;top:600.00px;font:bold 21px/21px 'Liberation Sans', sans-serif;color:#fff;">Clear</div>
<div style="left:1612.7px;top:645.7px;width:98.89999999999986px;height:40.89999999999998px;background:#000;border:3px solid #fff;border-radius:6px;box-sizing:border-box;"></div>
<div class="t" style="left:1162.15px;width:1000px;text-align:center;top:655.40px;font:bold 21px/21px 'Liberation Sans', sans-serif;color:#fff;">Diff</div>
<div style="left:1612.7px;top:701.6px;width:98.89999999999986px;height:40.799999999999955px;background:#000;border:3px solid #fff;border-radius:6px;box-sizing:border-box;"></div>
<div class="t" style="left:1162.15px;width:1000px;text-align:center;top:711.40px;font:bold 21px/21px 'Liberation Sans', sans-serif;color:#fff;">Edit</div>
<div style="left:62px;top:1166px;width:1676px;height:72.5px;background:#585858;border:3px solid #fff;border-radius:6px;box-sizing:border-box;"></div>
<div style="left:84.6px;top:1177.5px;width:156.9px;height:48.799999999999955px;background:#aaaaaa;border:3px solid #fff;border-radius:6px;box-sizing:border-box;"></div>
<div class="t" style="left:-336.95px;width:1000px;text-align:center;top:1189.31px;font:bold 25px/25px 'Liberation Sans', sans-serif;color:#f4f4f4;">Script</div>
<div style="left:255px;top:1177.5px;width:156.5px;height:48.799999999999955px;background:#000;border:3px solid #fff;border-radius:6px;box-sizing:border-box;"></div>
<div class="t" style="left:-166.75px;width:1000px;text-align:center;top:1189.31px;font:bold 25px/25px 'Liberation Sans', sans-serif;color:#fff;">Production</div>
<div style="left:658px;top:1177.5px;width:156.20000000000005px;height:48.799999999999955px;background:#000;border:3px solid #fff;border-radius:6px;box-sizing:border-box;"></div>
<div class="t" style="left:236.10000000000002px;width:1000px;text-align:center;top:1189.31px;font:bold 25px/25px 'Liberation Sans', sans-serif;color:#fff;">Characters</div>
<div style="left:828.2px;top:1177.5px;width:156.5px;height:48.799999999999955px;background:#000;border:3px solid #fff;border-radius:6px;box-sizing:border-box;"></div>
<div class="t" style="left:406.45000000000005px;width:1000px;text-align:center;top:1189.31px;font:bold 25px/25px 'Liberation Sans', sans-serif;color:#fff;">Actors</div>
<div style="left:998.4px;top:1177.5px;width:156.60000000000002px;height:48.799999999999955px;background:#000;border:3px solid #fff;border-radius:6px;box-sizing:border-box;"></div>
<div class="t" style="left:576.7px;width:1000px;text-align:center;top:1189.31px;font:bold 25px/25px 'Liberation Sans', sans-serif;color:#fff;">Reports</div>
<div style="left:1386.4px;top:1177.5px;width:157.0px;height:48.799999999999955px;background:#aaaaaa;border:3px solid #fff;border-radius:6px;box-sizing:border-box;"></div>
<div class="t" style="left:964.9000000000001px;width:1000px;text-align:center;top:1189.31px;font:bold 25px/25px 'Liberation Sans', sans-serif;color:#f4f4f4;">Last Shot</div>
<div style="left:1556.8px;top:1177.5px;width:156.5px;height:48.799999999999955px;background:#aaaaaa;border:3px solid #fff;border-radius:6px;box-sizing:border-box;"></div>
<div class="t" style="left:1135.05px;width:1000px;text-align:center;top:1189.31px;font:bold 25px/25px 'Liberation Sans', sans-serif;color:#f4f4f4;">Shot</div>
<div style="left:663px;top:1238.5px;width:474px;height:7.099999999999909px;background:#efefef;border-radius:4px;"></div>
<div style="left:692px;top:409.2px;width:416.5px;height:311.59999999999997px;background:#2b2b2c;border-radius:22px;"></div>
<div style="left:863px;top:442px;width:74px;height:74px;border-radius:50%;background:conic-gradient(from 90deg,#2e2e2e 0deg,#4a4a4a 40deg,#8a8a8a 90deg,#b8b8b8 180deg,#e2e2e2 270deg,#f2f2f2 325deg,transparent 325.5deg);-webkit-mask-image:radial-gradient(circle closest-side,transparent 32.3px,#000 33.1px,#000 36.6px,transparent 37.2px);mask-image:radial-gradient(circle closest-side,transparent 32.3px,#000 33.1px,#000 36.6px,transparent 37.2px);"></div>
<div style="left:926.7px;top:456.9px;width:4px;height:4px;border-radius:50%;background:#f2f2f2;"></div>
<div class="t" style="left:400px;width:1000px;text-align:center;top:547.42px;font:normal 29px/29px 'Liberation Sans', sans-serif;color:#ececec;letter-spacing:0.45px;">Notifying server to process</div>
<div class="t" style="left:400px;width:1000px;text-align:center;top:586.72px;font:normal 29px/29px 'Liberation Sans', sans-serif;color:#ececec;letter-spacing:0.45px;">uploaded data file.</div>
<div class="t" style="left:400px;width:1000px;text-align:center;top:624.82px;font:normal 29px/29px 'Liberation Sans', sans-serif;color:#ececec;letter-spacing:0.45px;">This process could take</div>
<div class="t" style="left:400px;width:1000px;text-align:center;top:662.92px;font:normal 29px/29px 'Liberation Sans', sans-serif;color:#ececec;letter-spacing:0.45px;">several minutes...</div>
<div style="left:1008.6px;top:660.4px;width:28px;height:28px;border-radius:50%;background:#8c8c8c;"></div>
</body></html>
